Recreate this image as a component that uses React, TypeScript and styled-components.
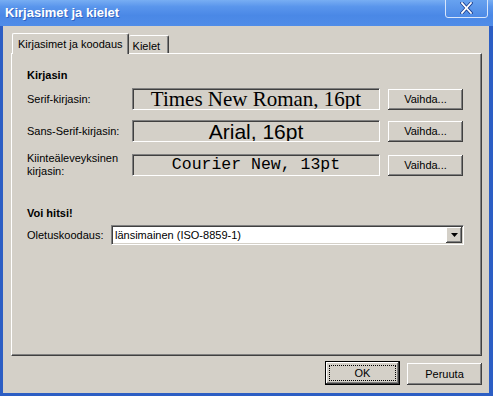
import { Fragment } from "react";
import styled, { createGlobalStyle } from "styled-components";

const GlobalStyle = createGlobalStyle`
  html, body {
    margin: 0;
    padding: 0;
    background: #d4d0c8;
  }
  * {
    box-sizing: border-box;
  }
`;

const FACE = "#d4d0c8";

const Window = styled.div`
  width: 493px;
  height: 396px;
  display: flex;
  flex-direction: column;
  background: #2c5ec4;
  font-family: "Liberation Sans", Arial, sans-serif;
  font-size: 11px;
  color: #000;
  overflow: hidden;
`;

const TitleBar = styled.div`
  height: 26px;
  flex: none;
  display: flex;
  align-items: center;
  padding: 0 5px 0 5px;
  background: linear-gradient(180deg, #78aef3 0%, #5a96ec 25%, #4a88e6 60%, #4f8ce8 100%);
`;

const Title = styled.div`
  font-size: 13px;
  font-weight: bold;
  color: #fff;
  text-shadow: 1px 1px 0 rgba(16, 48, 140, 0.45);
  margin-top: -1px;
`;

const CloseButton = styled.div`
  margin-left: auto;
  align-self: flex-start;
  margin-top: -4px;
  width: 43px;
  height: 22px;
  border: 1px solid #d8e6fb;
  border-radius: 3px;
  background: linear-gradient(180deg, #6ca6f1, #4d8ae6);
  display: flex;
  align-items: flex-end;
  justify-content: center;
  padding-bottom: 3px;
`;

const Client = styled.div`
  flex: 1;
  margin: 0 4px 3px 3px;
  background: ${FACE};
  padding: 7px 7px 7px 8px;
  display: flex;
  flex-direction: column;
`;

const TabStrip = styled.div`
  display: flex;
  align-items: flex-end;
  height: 20px;
  padding-left: 1px;
  position: relative;
  z-index: 1;
`;

const Tab = styled.div<{ $active?: boolean }>`
  height: ${(p) => (p.$active ? "21px" : "18px")};
  padding: ${(p) => (p.$active ? "0 5px 1px 5px" : "2px 8px 0 4px")};
  display: flex;
  align-items: center;
  white-space: nowrap;
  background: ${FACE};
  border-top: 1px solid #fff;
  border-left: ${(p) => (p.$active ? "1px solid #fff" : "none")};
  border-right: 1px solid #404040;
  border-top-left-radius: 2px;
  border-top-right-radius: 2px;
  box-shadow: inset -1px 0 0 #808080;
  margin-bottom: ${(p) => (p.$active ? "-1px" : "0")};
`;

const Panel = styled.div`
  height: 303px;
  flex: none;
  background: ${FACE};
  border-top: 1px solid #fff;
  border-left: 1px solid #fff;
  border-right: 1px solid #404040;
  border-bottom: 1px solid #404040;
  box-shadow: inset -1px -1px 0 #808080;
  padding: 14px 0 0 15px;
  display: flex;
  flex-direction: column;
`;

const Heading = styled.div`
  font-weight: bold;
  line-height: 14px;
  height: 14px;
`;

const FontGrid = styled.div`
  display: grid;
  grid-template-columns: 97px 248px 75px;
  column-gap: 8px;
  row-gap: 10px;
  margin-top: 6px;
  align-items: center;
`;

const Label = styled.div`
  line-height: 13px;
`;

const Sunken = styled.div`
  border-top: 1px solid #808080;
  border-left: 1px solid #808080;
  border-bottom: 1px solid #fff;
  border-right: 1px solid #fff;
  box-shadow: inset 1px 1px 0 #404040, inset -1px -1px 0 ${FACE};
`;

const FontField = styled(Sunken)<{ $family: string; $size: number }>`
  height: 22px;
  display: flex;
  align-items: center;
  justify-content: center;
  font-family: ${(p) => p.$family};
  font-size: ${(p) => p.$size}px;
  line-height: 1;
  white-space: nowrap;
  overflow: hidden;
  padding-top: 1px;
`;

const Button = styled.div<{ $w?: number; $h?: number }>`
  width: ${(p) => p.$w ?? 75}px;
  height: ${(p) => p.$h ?? 21}px;
  background: ${FACE};
  box-shadow: inset -1px -1px 0 #404040, inset 1px 1px 0 #fff, inset -2px -2px 0 #808080;
  display: flex;
  align-items: center;
  justify-content: center;
  padding-bottom: 1px;
`;

const DefaultButton = styled.div`
  width: 75px;
  height: 24px;
  border: 1px solid #000;
  display: flex;
`;

const DefaultInner = styled(Button)`
  flex: 1;
  height: 22px;
  padding: 3px;
`;

const FocusRect = styled.div`
  flex: 1;
  align-self: stretch;
  border: 1px dotted #000;
  display: flex;
  align-items: center;
  justify-content: center;
`;

const Section = styled(Heading)`
  margin-top: 28px;
`;

const ComboRow = styled.div`
  display: flex;
  align-items: center;
  margin-top: 5px;
`;

const ComboLabel = styled.div`
  width: 84px;
`;

const Combo = styled(Sunken)`
  width: 353px;
  height: 20px;
  background: #fff;
  display: flex;
  align-items: center;
  padding: 0 1px 0 3px;
`;

const ComboText = styled.div`
  flex: 1;
`;

const ComboArrow = styled(Button)`
  width: 16px;
  height: 16px;
  padding: 0;
`;

const Footer = styled.div`
  display: flex;
  justify-content: flex-end;
  align-items: flex-start;
  gap: 7px;
  margin-top: 5px;
`;

const PlainFooterButton = styled(Button)`
  margin-top: 2px;
`;

const fonts = [
  { label: "Serif-kirjasin:", family: "'Liberation Serif', 'Times New Roman', serif", size: 21, text: "Times New Roman, 16pt" },
  { label: "Sans-Serif-kirjasin:", family: "'Liberation Sans', Arial, sans-serif", size: 21, text: "Arial, 16pt" },
  { label: "Kiinteäleveyksinen kirjasin:", family: "'Liberation Mono', 'Courier New', monospace", size: 16.5, text: "Courier New, 13pt" },
];

export default function App() {
  return (
    <>
      <GlobalStyle />
      <Window>
        <TitleBar>
          <Title>Kirjasimet ja kielet</Title>
          <CloseButton>
            <svg width="13" height="12" viewBox="0 0 13 12">
              <path d="M2 1 L11 11 M11 1 L2 11" stroke="#1d3f8f" strokeWidth="3.4" strokeLinecap="square" />
              <path d="M2 1 L11 11 M11 1 L2 11" stroke="#fff" strokeWidth="1.8" strokeLinecap="square" />
            </svg>
          </CloseButton>
        </TitleBar>
        <Client>
          <TabStrip>
            <Tab $active>Kirjasimet ja koodaus</Tab>
            <Tab>Kielet</Tab>
          </TabStrip>
          <Panel>
            <Heading>Kirjasin</Heading>
            <FontGrid>
              {fonts.map((f) => (
                <Fragment key={f.label}>
                  <Label>{f.label}</Label>
                  <FontField $family={f.family} $size={f.size}>
                    {f.text}
                  </FontField>
                  <Button>Vaihda...</Button>
                </Fragment>
              ))}
            </FontGrid>
            <Section>Voi hitsi!</Section>
            <ComboRow>
              <ComboLabel>Oletuskoodaus:</ComboLabel>
              <Combo>
                <ComboText>länsimainen (ISO-8859-1)</ComboText>
                <ComboArrow>
                  <svg width="7" height="4" viewBox="0 0 7 4">
                    <path d="M0 0 H7 L3.5 4 Z" fill="#000" />
                  </svg>
                </ComboArrow>
              </Combo>
            </ComboRow>
          </Panel>
          <Footer>
            <DefaultButton>
              <DefaultInner>
                <FocusRect>OK</FocusRect>
              </DefaultInner>
            </DefaultButton>
            <PlainFooterButton $h={22}>Peruuta</PlainFooterButton>
          </Footer>
        </Client>
      </Window>
    </>
  );
}
